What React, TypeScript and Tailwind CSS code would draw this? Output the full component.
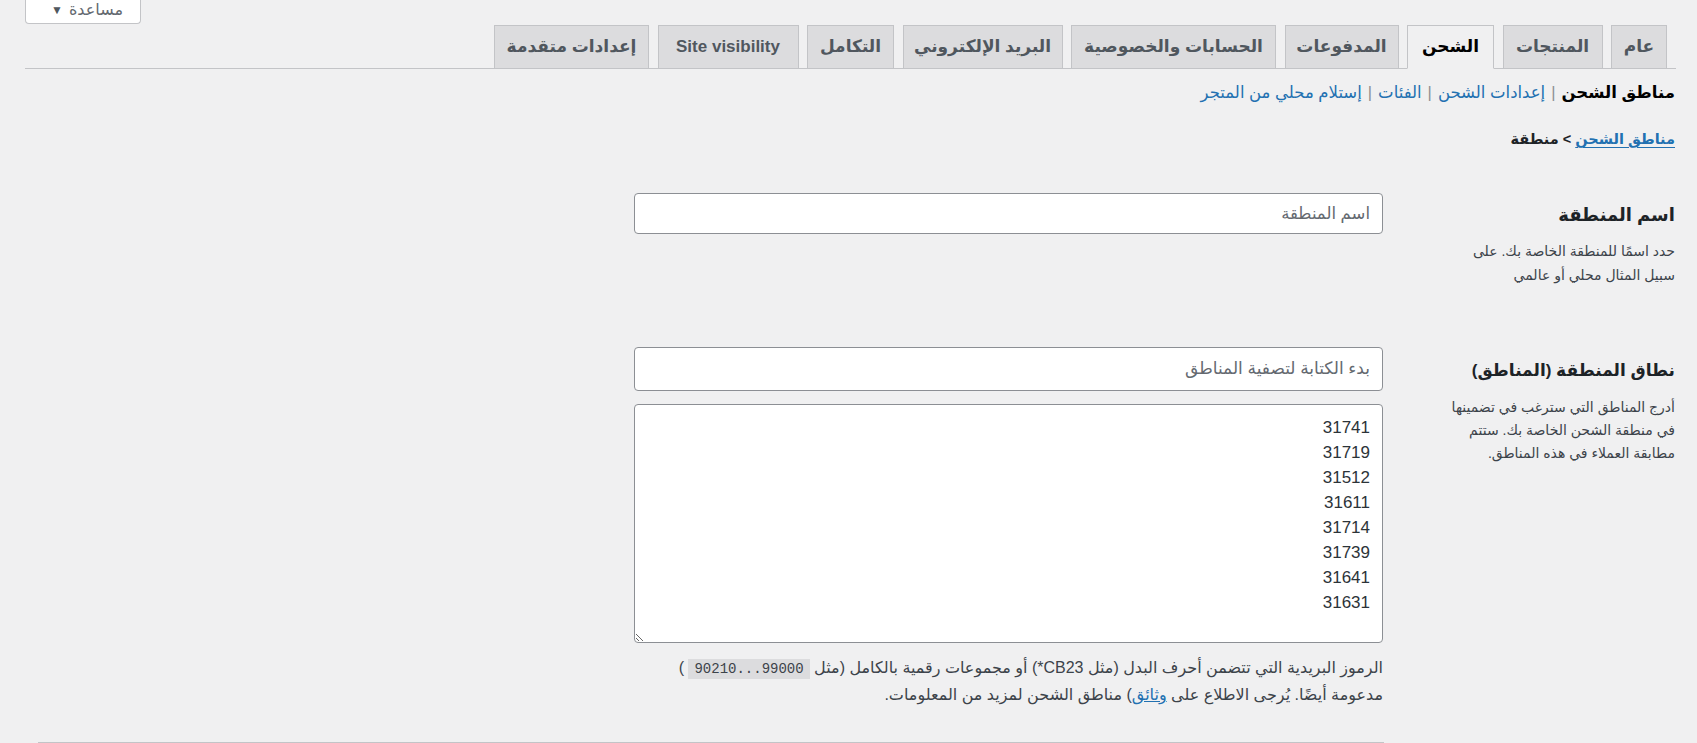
import React from "react";

const tabs: { label: string; w: string; active?: boolean }[] = [
  { label: "عام", w: "w-[56px]" },
  { label: "المنتجات", w: "w-[100px]" },
  { label: "الشحن", w: "w-[87px]", active: true },
  { label: "المدفوعات", w: "w-[114px]" },
  { label: "الحسابات والخصوصية", w: "w-[205px]" },
  { label: "البريد الإلكتروني", w: "w-[160px]" },
  { label: "التكامل", w: "w-[87px]" },
  { label: "Site visibility", w: "w-[141px]" },
  { label: "إعدادات متقدمة", w: "w-[155px]" },
];

const zips = ["31741", "31719", "31512", "31611", "31714", "31739", "31641", "31631"];

export default function App() {
  return (
    <div
      dir="rtl"
      className="h-[743px] w-full overflow-hidden bg-[#f0f0f1] text-[#3c434a] font-['Liberation_Sans','DejaVu_Sans',sans-serif]"
    >
      {/* help button row */}
      <div className="flex h-[25px] justify-end pl-[25px]">
        <button className="flex h-[24px] w-[116px] items-center justify-center gap-[6px] rounded-b-[4px] border border-t-0 border-[#c3c4c7] bg-white pb-[3px] pl-[8px] text-[16px] text-[#646970]">
          <span>مساعدة</span>
          <span className="text-[12px] leading-none text-[#50575e]">▼</span>
        </button>
      </div>

      {/* tabs */}
      <nav className="ml-[25px] mr-[21px] flex h-[44px] gap-[8.5px] border-b border-[#c3c4c7] pr-[9px]">
        {tabs.map((t) => (
          <a
            key={t.label}
            className={
              "-mb-px flex h-[44px] shrink-0 items-center justify-center border text-[17px] font-bold " +
              t.w +
              (t.active
                ? " border-[#c3c4c7] border-b-[#f0f0f1] bg-[#f0f0f1] text-black"
                : " border-[#c3c4c7] bg-[#dcdcde] text-[#50575e]")
            }
          >
            {t.label}
          </a>
        ))}
      </nav>

      <div className="pr-[22px]">
        {/* sub nav */}
        <div className="mt-[11px] flex h-[24px] items-center gap-[6px] text-[16.5px] leading-[24px]">
          <span className="font-bold text-black">مناطق الشحن</span>
          <span className="text-[#8c8f94]">|</span>
          <a className="text-[#2271b1]">إعدادات الشحن</a>
          <span className="text-[#8c8f94]">|</span>
          <a className="text-[#2271b1]">الفئات</a>
          <span className="text-[#8c8f94]">|</span>
          <a className="text-[#2271b1]">إستلام محلي من المتجر</a>
        </div>

        {/* breadcrumb */}
        <div className="mt-[23px] h-[24px] text-[14.5px] font-bold leading-[24px] text-[#1d2327]">
          <a className="text-[#2271b1] underline underline-offset-[3px]">مناطق الشحن</a>
          <span> &gt; </span>
          <span>منطقة</span>
        </div>

        {/* row 1 */}
        <div className="mt-[42px] flex items-start">
          <div className="w-[292px] shrink-0 pt-[10px]">
            <div className="h-[24px] text-[18px] font-bold leading-[24px] text-[#1d2327]">اسم المنطقة</div>
            <p className="mt-[12px] text-[14px] leading-[24px] text-[#3c434a]">
              حدد اسمًا للمنطقة الخاصة بك. على
              <br />
              سبيل المثال محلي أو عالمي
            </p>
          </div>
          <div className="w-[749px] shrink-0">
            <input
              placeholder="اسم المنطقة"
              className="h-[41px] w-full rounded-[4px] border border-[#8c8f94] bg-white px-[12px] text-[16.5px] text-[#2c3338] outline-none placeholder:text-[#646970]"
            />
          </div>
        </div>

        {/* row 2 */}
        <div className="mt-[60px] flex items-start">
          <div className="w-[292px] shrink-0 pt-[12px]">
            <div className="h-[24px] text-[17px] font-bold leading-[24px] text-[#1d2327]">نطاق المنطقة (المناطق)</div>
            <p className="mt-[13px] text-[14px] leading-[23px] text-[#3c434a]">
              أدرج المناطق التي سترغب في تضمينها
              <br />
              في منطقة الشحن الخاصة بك. ستتم
              <br />
              مطابقة العملاء في هذه المناطق.
            </p>
          </div>
          <div className="w-[749px] shrink-0">
            <input
              placeholder="بدء الكتابة لتصفية المناطق"
              className="h-[44px] w-full rounded-[4px] border border-[#8c8f94] bg-white px-[12px] text-[17px] text-[#2c3338] outline-none placeholder:text-[#646970]"
            />
            <textarea
              defaultValue={zips.join("\n")}
              className="mt-[13px] block h-[239px] w-full rounded-[4px] border border-[#8c8f94] bg-white px-[12px] pt-[10px] font-['Liberation_Sans',sans-serif] text-[17px] leading-[25px] text-[#2c3338] outline-none"
            />
            <p className="mt-[12px] text-[16px] leading-[25px] text-[#3c434a]">
              الرموز البريدية التي تتضمن أحرف البدل (مثل CB23*) أو مجموعات رقمية بالكامل (مثل{" "}
              <code
                dir="ltr"
                className="bg-[#dcdcde] px-[6px] py-[2px] font-['Liberation_Mono',monospace] text-[14px] text-[#3c434a]"
              >
                90210...99000
              </code>{" "}
              )
              <br />
              مدعومة أيضًا. يُرجى الاطلاع على{" "}
              <a className="text-[#2271b1] underline">وثائق</a>) مناطق الشحن لمزيد من المعلومات.
            </p>
          </div>
        </div>

        {/* next table top edge */}
        <div className="ml-[38px] mr-[291px] mt-[35px] h-[30px] border border-[#c3c4c7] bg-white" />
      </div>
    </div>
  );
}
